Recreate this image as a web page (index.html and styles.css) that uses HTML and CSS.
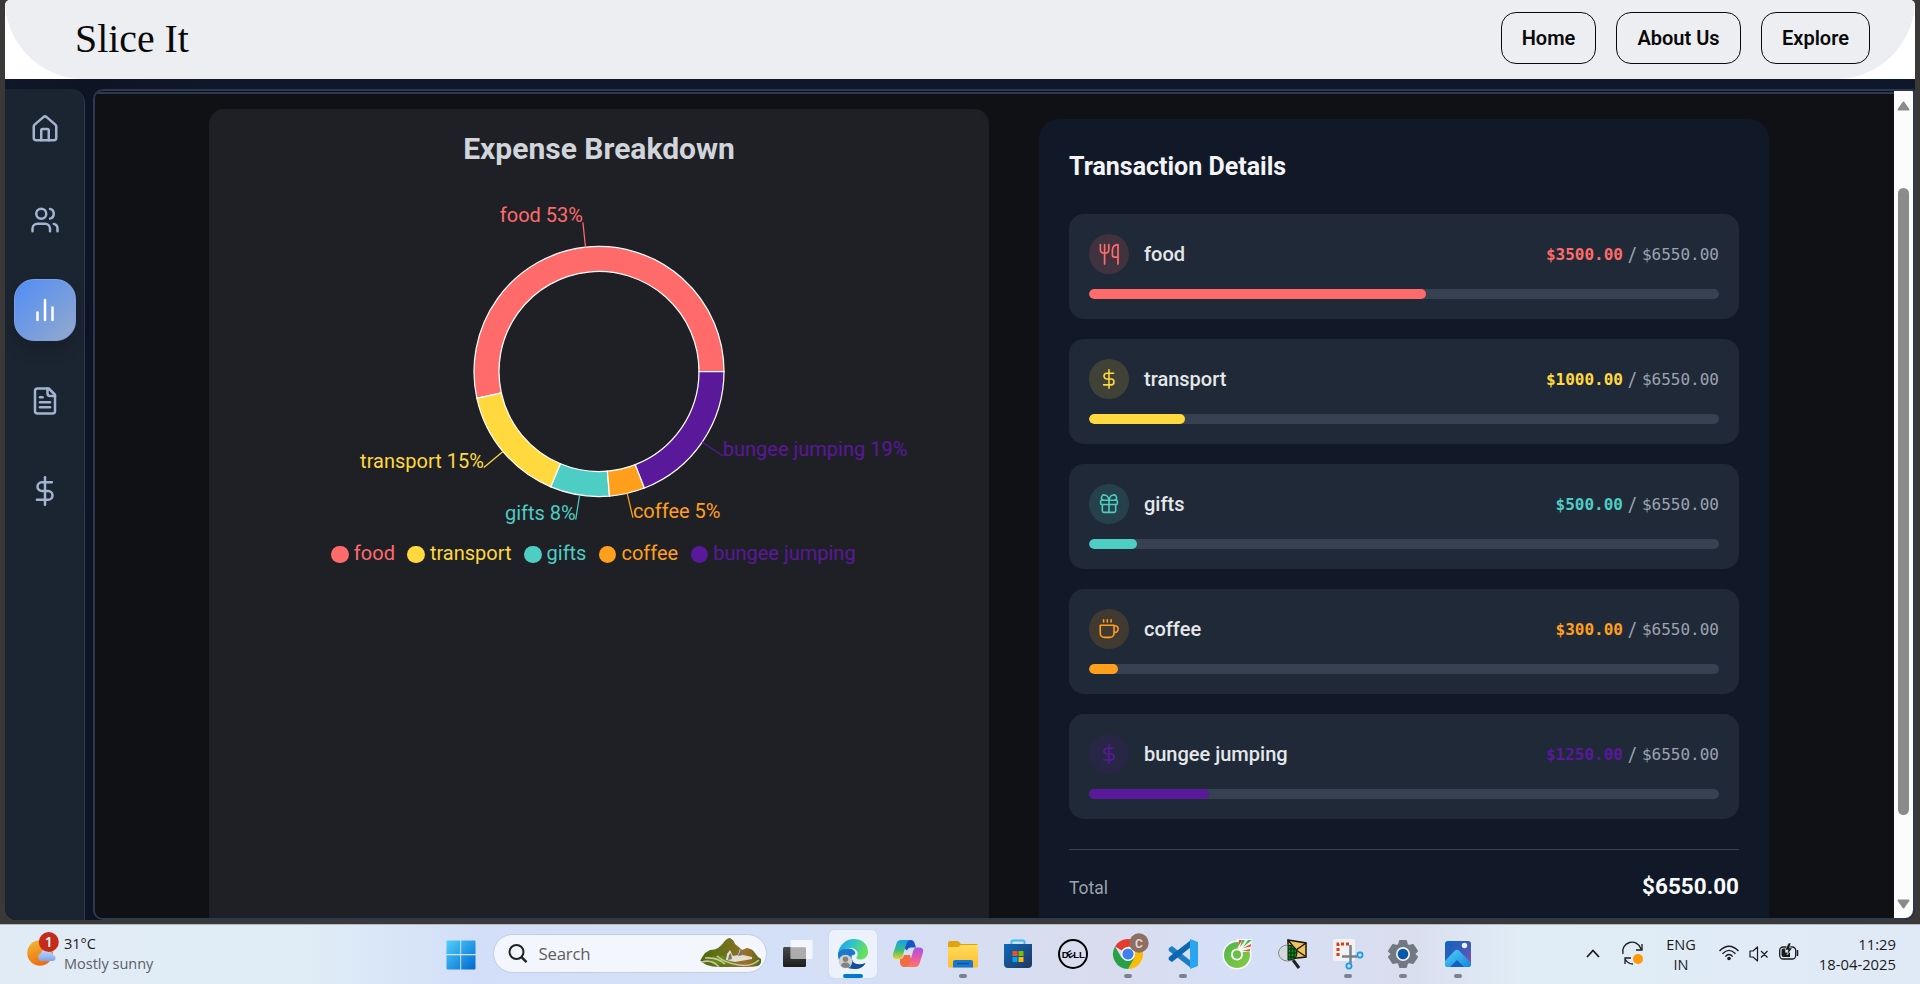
FILE: index.html
```html
<!DOCTYPE html>
<html lang="en">
<head>
<meta charset="utf-8">
<title>Slice It</title>
<link rel="stylesheet" href="styles.css">
</head>
<body>
<svg class="defs" width="0" height="0" aria-hidden="true">
  <defs>
    <linearGradient id="gWin" x1="0" y1="0" x2="1" y2="1"><stop offset="0" stop-color="#4fd0fd"/><stop offset="1" stop-color="#0068cf"/></linearGradient>
    <linearGradient id="gSun" x1="0" y1="0" x2=".4" y2="1"><stop offset="0" stop-color="#efbe30"/><stop offset="1" stop-color="#ee6e17"/></linearGradient>
    <linearGradient id="gCloud" x1="0" y1="0" x2="0" y2="1"><stop offset="0" stop-color="#c2dafa"/><stop offset="1" stop-color="#7fa4ea"/></linearGradient>
    <linearGradient id="gHill" x1="0" y1="0" x2="1" y2="0"><stop offset="0" stop-color="#4d6b0c"/><stop offset=".5" stop-color="#75721f"/><stop offset=".75" stop-color="#a0702a"/><stop offset="1" stop-color="#4b6a12"/></linearGradient>
    <linearGradient id="gEdge" x1="0" y1="0" x2="1" y2=".3"><stop offset="0" stop-color="#1b9de2"/><stop offset=".5" stop-color="#2fc3cd"/><stop offset="1" stop-color="#66e05a"/></linearGradient>
    <linearGradient id="gCopA" x1="0" y1="0" x2="0" y2="1"><stop offset="0" stop-color="#18a0f0"/><stop offset=".55" stop-color="#3dbd7a"/><stop offset="1" stop-color="#f5d020"/></linearGradient>
    <linearGradient id="gCopB" x1="0" y1="0" x2="0" y2="1"><stop offset="0" stop-color="#a453e8"/><stop offset=".6" stop-color="#ee5aa0"/><stop offset="1" stop-color="#fb7a5a"/></linearGradient>
    <linearGradient id="gFold" x1="0" y1="0" x2="0" y2="1"><stop offset="0" stop-color="#ffdc5c"/><stop offset="1" stop-color="#fcbc2a"/></linearGradient>
    <linearGradient id="gStore" x1="0" y1="0" x2="1" y2="1"><stop offset="0" stop-color="#0b6abb"/><stop offset="1" stop-color="#23365e"/></linearGradient>
    <linearGradient id="gCoc" x1="0" y1="0" x2="1" y2="1"><stop offset="0" stop-color="#4ab648"/><stop offset="1" stop-color="#8dcb45"/></linearGradient>
    <linearGradient id="gPhoto" x1="0" y1="0" x2="1" y2="1"><stop offset="0" stop-color="#0b63c0"/><stop offset=".5" stop-color="#3c5bb8"/><stop offset="1" stop-color="#8c4fb0"/></linearGradient>
    <linearGradient id="gPeak" x1="0" y1="0" x2="1" y2="1"><stop offset="0" stop-color="#4fd2fb"/><stop offset="1" stop-color="#1584dc"/></linearGradient>
    <linearGradient id="gDark" x1="0" y1="0" x2="0" y2="1"><stop offset="0" stop-color="#4a4a4a"/><stop offset="1" stop-color="#1c1c1c"/></linearGradient>
    <symbol id="dollar" viewBox="0 0 24 24"><line x1="12" x2="12" y1="1" y2="23"/><path d="M17.5 5H9.5a3.5 3.5 0 0 0 0 7h5a3.5 3.5 0 0 1 0 7H5.5"/></symbol>
  </defs>
</svg>

<div class="browser">
  <div class="topbar">
    <header class="header">
      <h1 class="brand">Slice It</h1>
      <nav class="nav">
        <a class="nav-btn nav-home">Home</a>
        <a class="nav-btn nav-about">About Us</a>
        <a class="nav-btn nav-explore">Explore</a>
      </nav>
    </header>
  </div>

  <div class="workspace">
    <aside class="sidebar">
      <a class="side-item"><svg class="side-icon" viewBox="0 0 24 24"><path d="M15 21v-8a1 1 0 0 0-1-1h-4a1 1 0 0 0-1 1v8"/><path d="M3 10a2 2 0 0 1 .709-1.528l7-5.999a2 2 0 0 1 2.582 0l7 5.999A2 2 0 0 1 21 10v9a2 2 0 0 1-2 2H5a2 2 0 0 1-2-2z"/></svg></a>
      <a class="side-item"><svg class="side-icon" viewBox="0 0 24 24"><path d="M16 21v-2a4 4 0 0 0-4-4H6a4 4 0 0 0-4 4v2"/><circle cx="9" cy="7" r="4"/><path d="M22 21v-2a4 4 0 0 0-3-3.87"/><path d="M16 3.13a4 4 0 0 1 0 7.75"/></svg></a>
      <a class="side-item side-active"><svg class="side-icon" viewBox="0 0 24 24"><line x1="18" x2="18" y1="20" y2="10"/><line x1="12" x2="12" y1="20" y2="4"/><line x1="6" x2="6" y1="20" y2="14"/></svg></a>
      <a class="side-item"><svg class="side-icon" viewBox="0 0 24 24"><path d="M15 2H6a2 2 0 0 0-2 2v16a2 2 0 0 0 2 2h12a2 2 0 0 0 2-2V7Z"/><path d="M14 2v4a2 2 0 0 0 2 2h4"/><path d="M10 9H8"/><path d="M16 13H8"/><path d="M16 17H8"/></svg></a>
      <a class="side-item"><svg class="side-icon"><use href="#dollar"/></svg></a>
    </aside>

    <main class="panel">
      <div class="content">
        <section class="chart-card">
          <h2 class="chart-title">Expense Breakdown</h2>
          <svg class="chart" width="780" height="349" viewBox="-390 -182.5 780 349">
            <g stroke="#fff" stroke-width="1.25">
              <path fill="#ff6b6b" d="M125 0A125 125 0 1 0 -122.1 26.77L-97.68 21.41A100 100 0 1 1 100 0Z"/>
              <path fill="#ffd93d" d="M-122.1 26.77A125 125 0 0 0 -48.18 115.34L-38.54 92.27A100 100 0 0 1 -97.68 21.41Z"/>
              <path fill="#4ecdc4" d="M-48.18 115.34A125 125 0 0 0 10.48 124.56L8.39 99.65A100 100 0 0 1 -38.54 92.27Z"/>
              <path fill="#ff9f1c" d="M10.48 124.56A125 125 0 0 0 45.4 116.46L36.32 93.17A100 100 0 0 1 8.39 99.65Z"/>
              <path fill="#5a189a" d="M45.4 116.46A125 125 0 0 0 125 0L100 0A100 100 0 0 1 36.32 93.17Z"/>
            </g>
            <g fill="none" stroke-width="1.25">
              <path stroke="#ff6b6b" d="M-13.5 -124.3L-16.1 -149.1"/>
              <path stroke="#ffd93d" d="M-96 80.1L-115.2 96.1"/>
              <path stroke="#4ecdc4" d="M-19.4 123.5L-23.3 148.2"/>
              <path stroke="#ff9f1c" d="M28.2 121.8L33.9 146.1"/>
              <path stroke="#5a189a" d="M103.2 70.5L123.8 84.6"/>
            </g>
            <g class="chart-label">
              <text x="-16.1" y="-149.4" text-anchor="end" fill="#ff6b6b">food 53%</text>
              <text x="-115.2" y="96.1" text-anchor="end" fill="#ffd93d">transport 15%</text>
              <text x="-23.3" y="148.2" text-anchor="end" fill="#4ecdc4">gifts 8%</text>
              <text x="33.9" y="146.1" fill="#ff9f1c">coffee 5%</text>
              <text x="123.8" y="84.6" fill="#5a189a">bungee jumping 19%</text>
            </g>
          </svg>
          <div class="legend">
            <span class="legend-item food">food</span>
            <span class="legend-item transport">transport</span>
            <span class="legend-item gifts">gifts</span>
            <span class="legend-item coffee">coffee</span>
            <span class="legend-item bungee">bungee jumping</span>
          </div>
        </section>

        <section class="details">
          <h2 class="details-title">Transaction Details</h2>
          <div class="rows">
            <article class="row food">
              <div class="row-head">
                <span class="bubble"><svg class="row-icon utensils" viewBox="0 0 20 20"><path d="M1.4 .5v5.300q0 3.400 4.200 3.400t4.200-3.400V.5M5.600 .5v19.500M19 20V.6q-5 0-5.600 5.400v5q0 2.200 2.200 2.200H19"/></svg></span>
                <span class="row-name">food</span>
                <span class="amount"><b>$3500.00</b><i>/</i><span>$6550.00</span></span>
              </div>
              <div class="track"><div class="fill" style="width:53.44%"></div></div>
            </article>
            <article class="row transport">
              <div class="row-head">
                <span class="bubble"><svg class="row-icon"><use href="#dollar"/></svg></span>
                <span class="row-name">transport</span>
                <span class="amount"><b>$1000.00</b><i>/</i><span>$6550.00</span></span>
              </div>
              <div class="track"><div class="fill" style="width:15.27%"></div></div>
            </article>
            <article class="row gifts">
              <div class="row-head">
                <span class="bubble"><svg class="row-icon" viewBox="0 0 24 24"><rect x="2" y="7.500" width="20" height="5" rx="1.200"/><path d="M12 7.500v14.500M4 12.500V20a2 2 0 0 0 2 2h12a2 2 0 0 0 2-2v-7.500M12 7.500C11 3 9 1.500 7.500 1.500A2.800 2.800 0 0 0 5 7.500M12 7.500c1-4.500 3-6 4.500-6a2.800 2.800 0 0 1 2.500 6"/></svg></span>
                <span class="row-name">gifts</span>
                <span class="amount"><b>$500.00</b><i>/</i><span>$6550.00</span></span>
              </div>
              <div class="track"><div class="fill" style="width:7.63%"></div></div>
            </article>
            <article class="row coffee">
              <div class="row-head">
                <span class="bubble"><svg class="row-icon" viewBox="0 0 24 24"><path d="M18 8h1a4 4 0 0 1 0 8h-1M1.500 7.500H18v9.500a5 5 0 0 1-5 5H6.500a5 5 0 0 1-5-5ZM5.500 1v2.500M10 1v2.500M14.500 1v2.500"/></svg></span>
                <span class="row-name">coffee</span>
                <span class="amount"><b>$300.00</b><i>/</i><span>$6550.00</span></span>
              </div>
              <div class="track"><div class="fill" style="width:4.58%"></div></div>
            </article>
            <article class="row bungee">
              <div class="row-head">
                <span class="bubble"><svg class="row-icon"><use href="#dollar"/></svg></span>
                <span class="row-name">bungee jumping</span>
                <span class="amount"><b>$1250.00</b><i>/</i><span>$6550.00</span></span>
              </div>
              <div class="track"><div class="fill" style="width:19.08%"></div></div>
            </article>
          </div>
          <div class="total"><span class="total-label">Total</span><strong class="total-value">$6550.00</strong></div>
        </section>
      </div>
      <div class="scrollbar">
        <svg width="13" height="10" viewBox="0 0 13 10"><path d="M6.500 1.500L11.500 8.500H1.500Z" fill="#8b8b8b" stroke="#8b8b8b" stroke-width="2" stroke-linejoin="round"/></svg>
        <div class="thumb"></div>
        <svg width="13" height="10" viewBox="0 0 13 10"><path d="M6.500 8.500L11.500 1.500H1.500Z" fill="#8b8b8b" stroke="#8b8b8b" stroke-width="2" stroke-linejoin="round"/></svg>
      </div>
    </main>
  </div>
</div>

<footer class="taskbar">
  <div class="weather">
    <svg width="34" height="36" viewBox="0 0 34 36"><circle cx="14" cy="22" r="12.800" fill="url(#gSun)"/><path d="M15 30a4 4 0 0 1-.5-7.500 5.500 5.500 0 0 1 9-2.500 5 5 0 0 1 3 4 3 3 0 0 1 0 6Z" fill="url(#gCloud)"/><circle cx="22.800" cy="11" r="10" fill="#c42b1c"/><text class="badge-text" x="22.800" y="16" text-anchor="middle">1</text></svg>
    <div class="weather-text"><span>31°C</span><span class="muted">Mostly sunny</span></div>
  </div>

  <div class="start"><svg width="30" height="30" viewBox="0 0 30 30"><path fill="url(#gWin)" d="M1.500.5H14.200V14H.5V1.500a1 1 0 0 1 1-1ZM15.200.5H28.500a1 1 0 0 1 1 1V14H15.200ZM.5 15.200H14.200V29.500H1.500a1 1 0 0 1-1-1ZM15.200 15.200H29.500V28.500a1 1 0 0 1-1 1H15.200Z"/></svg></div>

  <div class="search">
    <svg class="search-icon" width="20" height="20" viewBox="0 0 20 20"><circle cx="8.500" cy="8" r="7" fill="none" stroke="#222" stroke-width="2"/><path d="M13.500 13.200L18.500 18.200" stroke="#222" stroke-width="2.500"/></svg>
    <span>Search</span>
    <svg class="hill" width="63" height="31" viewBox="0 0 63 31"><path fill="url(#gHill)" d="M1 23q2-4 5-8l5-3q5 0 8-2 4-3 6-6 3-4 6-4 4 2 5 6 4 3 7 6l5-2q6 1 8 5l3 4 3 2q1 5-3 7-5 1-12 1H20q-14 0-19-7Z"/><path fill="#638a15" d="M10 21q6-5 14-3t12 6q-12 4-20 1Z"/><path d="M3 24q10-3 17 5M18 18q8 7 22 9M40 27q12 2 20-5M6 20q12-1 20 6" fill="none" stroke="#c9c8a2" stroke-width="1.600"/><path fill="#e5ded2" d="M27 22l1-6 3-4 3 6 5-1 2-6 3 6 9 2v2l-17 3Z"/><path fill="#77756a" d="M29 22l1-5 2-2 1 6M39 18l3-7 2 6"/></svg>
  </div>

  <div class="apps">
    <div class="app"><svg class="app-icon" viewBox="0 0 30 30"><rect x="0" y="8" width="23" height="20" rx="1.500" fill="url(#gDark)"/><rect x="7.500" y="1" width="22" height="19" rx="1" fill="#fff" fill-opacity=".72"/><path d="M8 8.500h15v11.500H8Z" fill="#777" fill-opacity=".35"/></svg></div>
    <div class="app active"><svg class="app-icon" viewBox="0 0 30 30"><path fill="url(#gEdge)" d="M0 15C1 6 8 0 16 0c9 0 14 6 14 13 0 5-4 7.500-8 7.500-3 0-4.500-1.500-3-3 2-3-.5-8.500-6-8.500C6 9 2 12 0 15Z"/><path fill="#1b78cf" d="M0 14C3 10 7 9 11 9.500c5 .5 7 3.500 6 6-4 0-4 3-2.500 6 2 4.500 7 6 13 3C24 29 20 30 16 30 6 30-1 23 0 14Z"/><path fill="#134f91" d="M12 18c1 6 7 9 15.500 6C24 30 18 31 13 29Z"/><circle cx="7.500" cy="22.500" r="6.800" fill="#cfcfcc"/><circle cx="7.500" cy="20.300" r="2.700" fill="#85827e"/><path fill="#85827e" d="M3 27q0-3.500 4.500-3.500T12 27q-4 4-9 0Z"/></svg><i class="mark"></i></div>
    <div class="app"><svg class="app-icon" viewBox="0 0 30 30"><path fill="#1755c7" d="M13 1h5q2.500 0 3.500 3l1.500 4.500h-5q-3 0-4 3L11 9Z"/><path fill="url(#gCopA)" d="M8 1h9q-3 1-4 5l-3 10q-1 4-4 4H4q-5 0-4-5L3 6q1-5 5-5Z"/><path fill="#f26c43" d="M7 20q3 0 4-4h6l2 7q-2 5-6 5h-2q-3 0-4-4Z"/><path fill="url(#gCopB)" d="M22 28h-9q3-1 4-5l3-10.500q1-4 4-4h2q5 0 4 5L27 23q-1 5-5 5Z"/></svg></div>
    <div class="app"><svg class="app-icon" viewBox="0 0 30 30"><path fill="#e2a10f" d="M0 4q0-2 2-2h7q1 0 2 1l2 2h15q2 0 2 2v5H0Z"/><path fill="url(#gFold)" d="M0 8h10l3-2h17v21q0 1.500-1.500 1.500h-27Q0 28.500 0 27Z"/><path fill="#1478d1" d="M5 28.500V23q0-2 2-2h16q2 0 2 2v5.500Z"/><path d="M9 24.500h12" stroke="#0a54a0" stroke-width="1.500"/></svg><i class="mark"></i></div>
    <div class="app"><svg class="app-icon" viewBox="0 0 30 30"><path d="M8.500 7V3q0-1.500 1.500-1.500h10q1.500 0 1.500 1.500v4" fill="none" stroke="#3bbcf3" stroke-width="2"/><path fill="url(#gStore)" d="M1 5h28v20q0 4-4 4H5q-4 0-4-4Z"/><path fill="#f25022" d="M9.500 12h5v5h-5Z"/><path fill="#7fba00" d="M15.500 12h5v5h-5Z"/><path fill="#00a4ef" d="M9.500 18h5v5h-5Z"/><path fill="#ffb900" d="M15.500 18h5v5h-5Z"/></svg></div>
    <div class="app"><svg class="app-icon" viewBox="0 0 30 30"><circle cx="15" cy="15" r="14" fill="none" stroke="#000" stroke-width="2"/><text class="dell" x="3.700" y="18.700">D</text><text class="dell" x="8.700" y="18.500" transform="rotate(-33 12 15)">E</text><text class="dell" x="15.300" y="18.700">LL</text></svg></div>
    <div class="app"><svg class="app-icon chrome" viewBox="0 0 30 30"><path fill="#e33b2e" d="M15 15L2 7.500A15 15 0 0 1 28 7.500Z"/><path fill="#fbbc05" d="M15 15V7.500h13A15 15 0 0 1 15 30Z"/><path fill="#28a047" d="M2 7.500A15 15 0 0 0 15 30L21.500 18.500 15 15 8.500 18.500Z"/><circle cx="15" cy="15" r="7" fill="#fff"/><circle cx="15" cy="15" r="5.600" fill="#3f80ee"/><circle cx="26" cy="4" r="9.700" fill="#8d6e63"/><text class="profile" x="26" y="8.500" text-anchor="middle">C</text></svg><i class="mark"></i></div>
    <div class="app"><svg class="app-icon" viewBox="0 0 30 30"><path fill="#1b7fc6" d="M1 9l3-2 19 15v7L1 12q-1-1.500 0-3Z"/><path fill="#0c68ae" d="M1 21l3 2L23 8V1L1 18q-1 1.500 0 3Z"/><path fill="#2aa5f0" d="M22 0l8 3v24l-8 3Z"/></svg><i class="mark"></i></div>
    <div class="app"><svg class="app-icon" viewBox="0 0 30 30"><circle cx="14" cy="16" r="14.500" fill="#fff"/><path fill="#fff" d="M14 0h15l-2 14H14Z"/><circle cx="14" cy="16" r="13" fill="url(#gCoc)"/><path fill="#f0f5ed" d="M14 14L16 1h12v11Z"/><path fill="#46b34b" d="M20 8l5-7h4ZM17 8l2-7 3 .5Z"/><path fill="#ee4e3d" d="M15 8l1-7h3ZM20 9l8-4v2.500ZM19 12l8-2v2Z"/><circle cx="14" cy="15.500" r="6" fill="#fff"/><circle cx="14" cy="15.500" r="4.200" fill="#69be47"/></svg></div>
    <div class="app"><svg class="app-icon" viewBox="0 0 30 30"><path fill="#f0c45a" stroke="#161309" stroke-width="1.500" d="M10 1l18 3v14l-18 2Z"/><path d="M10 1l8 10 10-7M18 11l9 6" fill="none" stroke="#161309" stroke-width="1.300"/><ellipse cx="9.500" cy="14" rx="9" ry="8" fill="#d5d8dc" stroke="#85898c"/><path fill="#128b20" stroke="#071f08" d="M10 6q9 1 9 8t-9 7Z"/><path d="M10 10h8M10 14h9M10 18h7M13 7v13M16 8v11" stroke="#062809"/><path d="M15 21l6 8" stroke="#222" stroke-width="3"/></svg></div>
    <div class="app"><svg class="app-icon" viewBox="0 0 30 30"><rect width="22" height="22" rx="2" fill="#f1f1f2"/><path d="M5 17V5h13" fill="none" stroke="#d93b18" stroke-width="3" stroke-dasharray="3 2"/><path d="M17.500 6v18M9 17.500h15" stroke="#76828a" stroke-width="2.500"/><circle cx="27" cy="16" r="2.600" fill="none" stroke="#149be4" stroke-width="1.700"/><circle cx="16" cy="27" r="2.600" fill="none" stroke="#149be4" stroke-width="1.700"/></svg><i class="mark"></i></div>
    <div class="app"><svg class="app-icon" viewBox="0 0 30 30"><path fill="#727980" stroke="#727980" stroke-width="2" stroke-linejoin="round" d="M12 2h6l1 4 2 1 4-1 4 6-3 3 3 3-4 6-4-1-2 1-1 4h-6l-1-4-2-1-4 1-4-6 3-3-3-3 4-6 4 1 2-1Z"/><circle cx="15" cy="15" r="7" fill="#eee"/><circle cx="15" cy="15" r="5.300" fill="#0758a8"/></svg><i class="mark"></i></div>
    <div class="app"><svg class="app-icon" viewBox="0 0 30 30"><rect x="2" y="2" width="26" height="26" rx="3" fill="url(#gPhoto)"/><path fill="url(#gPeak)" d="M2 22L12 11.500q2-1.500 4 0L28 24v1q0 3-3 3H5q-3 0-3-3Z"/><path fill="#1162bd" d="M7 28l7-7 7 7Z"/><circle cx="21.500" cy="6.500" r="2.700" fill="#e8f2ff"/></svg><i class="mark"></i></div>
  </div>

  <div class="tray">
    <svg class="chevron" width="14" height="9" viewBox="0 0 14 9"><path d="M1 8l6-6.500L13 8" fill="none" stroke="#1b1b1b" stroke-width="1.800"/></svg>
    <svg class="sync" width="22" height="22" viewBox="0 0 22 22"><path d="M1 11A9 9 0 0 1 19 6M20 1v6h-6M3 21v-6h6M3 16q3 5 8 5" fill="none" stroke="#1b1b1b" stroke-width="1.300"/><circle cx="16" cy="16" r="5" fill="#ff9803"/></svg>
    <div class="lang"><span>ENG</span><span>IN</span></div>
    <svg class="wifi" width="20" height="16" viewBox="0 0 20 16"><g fill="none" stroke="#1b1b1b" stroke-width="1.400"><path d="M.5 6Q10-3.500 19.500 6"/><path d="M3.500 8.800Q10 2 16.500 8.800"/><path d="M6.300 11.600Q10 7.500 13.700 11.600"/></g><circle cx="10" cy="13.500" r="1.800" fill="#1b1b1b"/></svg>
    <svg class="mute" width="20" height="16" viewBox="0 0 20 16"><path d="M1 5h3l4.500-4v14L4 11H1ZM12 5l6.500 6.500M18.500 5L12 11.500" fill="none" stroke="#1b1b1b" stroke-width="1.200" stroke-linejoin="round"/></svg>
    <svg class="battery" width="20" height="17" viewBox="0 0 20 17"><rect x=".7" y="4" width="16" height="12" rx="3.500" fill="none" stroke="#1b1b1b" stroke-width="1.300"/><path d="M18.500 7v6" stroke="#1b1b1b" stroke-width="1.500"/><path fill="#1b1b1b" d="M2.500 7.500q0-2 2-2H7l-1 4h5v4.500H4.500q-2 0-2-2Z"/><path fill="#1b1b1b" stroke="#e2edf7" stroke-width=".6" d="M9.500 0L6 7h3l-1 5 5.500-7H10.500L12 0Z"/></svg>
    <div class="clock"><span>11:29</span><span>18-04-2025</span></div>
  </div>
</footer>
</body>
</html>
```
FILE: styles.css
```css
* { box-sizing: border-box; }

body {
  margin: 0;
  width: 1920px;
  height: 984px;
  overflow: hidden;
  display: flex;
  flex-direction: column;
  background: #3a3937;
  font-family: Roboto, sans-serif;
}

h1, h2 { margin: 0; }
svg { display: block; flex: none; overflow: visible; }
.defs { position: absolute; }

.browser {
  width: 1910px;
  height: 920px;
  flex: none;
  margin: 0 5px;
  display: flex;
  flex-direction: column;
  background: #0f172a;
  border-radius: 5px 5px 12px 12px;
  overflow: hidden;
}

/* Header */
.topbar { background: #fff; height: 79px; flex: none; }
.header {
  height: 79px;
  padding: 12px 45px 15px 70px;
  display: flex;
  align-items: center;
  justify-content: space-between;
  background: #edeef2;
  border-radius: 0 0 79px 79px;
}
.brand {
  font: 400 39.800px/46px Georgia, "Liberation Serif", serif;
  padding-top: 1px;
  color: #0a0a0a;
}
.nav { display: flex; gap: 20px; }
.nav-btn {
  height: 52px;
  display: flex;
  align-items: center;
  justify-content: center;
  border: 1px solid #0a0a0a;
  border-radius: 15px;
  font-size: 20px;
  font-weight: 600;
  color: #0a0a0a;
}
.nav-home { width: 95px; }
.nav-about { width: 125px; }
.nav-explore { width: 109px; }

/* Workspace */
.workspace { flex: 1; padding-top: 10px; display: flex; gap: 8px; min-height: 0; background: linear-gradient(90deg, #0f172a, #0d1424 85px, #0f172a 200px); }
.sidebar {
  width: 80px;
  padding: 9px 0 0 9px;
  display: flex;
  flex-direction: column;
  gap: 28.600px;
  background: #1b2431;
  border-right: 1px solid #2b3950;
  border-radius: 0 14px 0 12px;
}
.side-item {
  width: 62px;
  height: 62px;
  flex: none;
  display: flex;
  align-items: center;
  justify-content: center;
  color: #a3b4d0;
}
.side-active {
  color: #fff;
  background: linear-gradient(135deg, #508df7, #94a9cb);
  border: 1px solid #7ba2e6;
  border-radius: 20px;
  box-shadow: 0 10px 15px rgba(0, 0, 0, .13);
}
.side-icon, .row-icon {
  fill: none;
  stroke: currentColor;
  stroke-width: 2;
  stroke-linecap: round;
  stroke-linejoin: round;
}
.side-icon { width: 30px; height: 30px; }

.panel {
  flex: 1;
  display: flex;
  border: 2px solid #2c3950;
  border-radius: 10px 3px 10px 10px;
  background: #101114;
  overflow: hidden;
}
.content {
  flex: 1;
  margin-top: 1px;
  border-top: 2px solid #2c3950;
  padding: 15px 125px 0 114px;
  display: flex;
  justify-content: space-between;
  background: #101114;
  min-height: 0;
}

/* Chart */
.chart-card {
  width: 780px;
  padding-top: 20px;
  background: #1f2025;
  border-radius: 15px 15px 0 0;
}
.chart-title {
  font-size: 30px;
  line-height: 40px;
  font-weight: 700;
  text-align: center;
  color: #d1d5db;
  margin-bottom: 20px;
}
.chart-label { font-size: 20px; }
.legend {
  display: flex;
  justify-content: center;
  gap: 12.500px;
  padding-right: 11px;
  font-size: 20px;
  line-height: 31px;
}
.legend-item { display: flex; align-items: center; gap: 5px; color: var(--tone); }
.legend-item::before {
  content: "";
  width: 17.500px;
  height: 17.500px;
  margin-top: 2px;
  border-radius: 50%;
  background: var(--tone);
}
.food { --tone: #ff6b6b; }
.transport { --tone: #ffd93d; }
.gifts { --tone: #4ecdc4; }
.coffee { --tone: #ff9f1c; }
.bungee { --tone: #5a189a; }

/* Transactions */
.details {
  width: 730px;
  margin-top: 10px;
  padding: 30px 30px 0;
  background: #111827;
  border-radius: 20px 20px 0 0;
}
.details-title {
  font-size: 25px;
  line-height: 35px;
  font-weight: 700;
  color: #f3f4f6;
  margin-bottom: 30px;
}
.rows { display: flex; flex-direction: column; gap: 20px; }
.row {
  height: 105px;
  padding: 20px;
  display: flex;
  flex-direction: column;
  gap: 15px;
  background: #1f2937;
  border-radius: 15px;
}
.row-head { display: flex; align-items: center; gap: 15px; height: 40px; }
.bubble {
  width: 40px;
  height: 40px;
  display: flex;
  align-items: center;
  justify-content: center;
  border-radius: 50%;
  color: var(--tone);
  background: color-mix(in srgb, var(--tone) 15%, transparent);
}
.row-icon { width: 20px; height: 20px; stroke-width: 1.900; }
.utensils { stroke-width: 1.700; }
.row-name { flex: 1; font-size: 20px; font-weight: 500; color: #e5e7eb; }
.amount {
  display: flex;
  align-items: center;
  padding-top: 2px;
  font: 16px/20px Consolas, "DejaVu Sans Mono", monospace;
  color: #9ca3af;
}
.amount b { color: var(--tone); }
.amount i { width: 19px; text-align: center; font: 400 20px/20px Roboto, sans-serif; }
.track { height: 10px; border-radius: 5px; background: #374151; overflow: hidden; }
.fill { height: 10px; border-radius: 5px; background: var(--tone); }
.total {
  margin-top: 30px;
  padding-top: 21px;
  border-top: 1px solid #374151;
  display: flex;
  align-items: baseline;
  justify-content: space-between;
  line-height: 30px;
}
.total-label { font-size: 17.500px; color: #9ca3af; }
.total-value { font-size: 22.500px; font-weight: 700; color: #f9fafb; }

.scrollbar {
  width: 19px;
  padding: 10px 0 9px;
  display: flex;
  flex-direction: column;
  align-items: center;
  background: #fcfcfc;
}
.thumb { width: 11px; height: 627px; margin: 77px 0 84px; border-radius: 6px; background: #8b8b8b; }

/* Taskbar */
.taskbar {
  height: 60px;
  margin-top: 4px;
  display: flex;
  align-items: flex-start;
  border-top: 1px solid #b5bac3;
  background: linear-gradient(90deg, #e1ebf6 0, #e0edf6 300px, #d3dff8 470px, #d4e0f7 800px, #d9dcee 1110px, #d5e0f7 1240px, #d9ddee 1400px, #e0ecf6 1520px, #dfeaf6 100%);
  font-family: "Segoe UI", "Open Sans", sans-serif;
  font-size: 14.500px;
  line-height: 20px;
  color: #1b1b1b;
}
.weather { width: 446px; padding: 6px 0 0 26px; display: flex; gap: 4px; }
.weather-text { display: flex; flex-direction: column; padding-top: 3px; }
.muted { color: #5c6066; }
.badge-text { font: 600 14px "Segoe UI", "Open Sans", sans-serif; fill: #fff; }
.start { padding-top: 15px; width: 47px; }
.search {
  width: 274px;
  height: 39px;
  margin: 9px 3.500px 0 0;
  padding: 0 4px 0 13.500px;
  display: flex;
  align-items: center;
  gap: 11px;
  border: 1px solid #c2cde2;
  border-radius: 20px;
  background: #f3f6fd;
  font-size: 16.800px;
  color: #5d5d5f;
}
.search span { letter-spacing: -.2px; padding-top: 1px; }
.hill { margin-left: auto; }
.apps { display: flex; width: 715px; }
.app {
  width: 48px;
  height: 48px;
  margin: 5px 3.500px 0;
  display: flex;
  flex-direction: column;
  align-items: center;
  padding-top: 9px;
  border-radius: 5px;
}
.active { background: #ecf1fb; box-shadow: 0 0 1px #aab5cb; }
.app-icon { width: 30px; height: 30px; }
.mark { width: 8px; height: 4px; margin-top: 5px; border-radius: 2px; background: #7c828d; }
.active .mark { width: 20px; background: #0078d4; }
.dell { font: 700 9.500px "Liberation Sans", sans-serif; }
.profile { font: 600 12px Roboto, sans-serif; fill: #e6d8d3; }
.tray { flex: 1; display: flex; padding-right: 24px; }
.chevron { margin: 24px 22px 0 100px; }
.sync { margin-top: 18px; }
.lang { width: 75px; margin-top: 10px; display: flex; flex-direction: column; align-items: center; }
.wifi { margin: 20px 10px 0 0; }
.mute { margin: 21px 10px 0 0; }
.battery { margin-top: 18px; }
.clock { margin: 9px 0 0 auto; display: flex; flex-direction: column; align-items: flex-end; font-size: 14.800px; }
```
